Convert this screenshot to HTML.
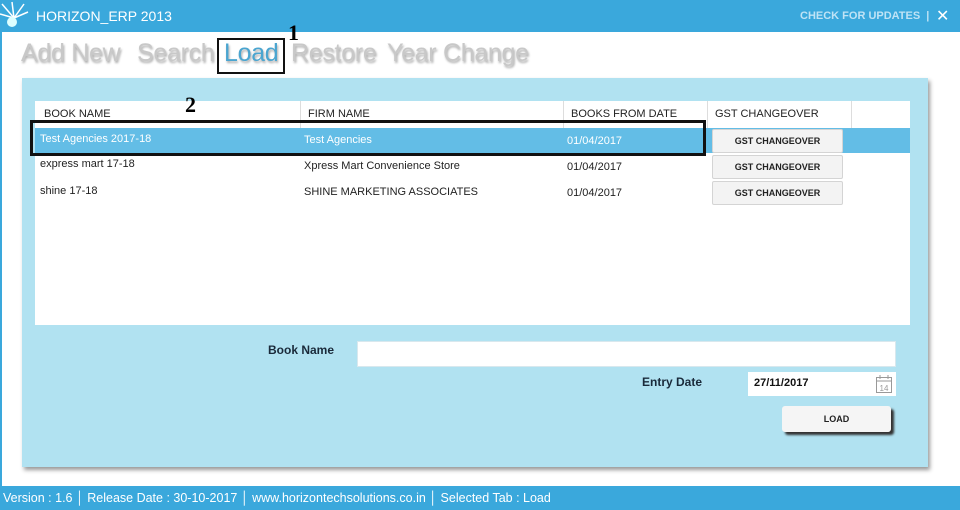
<!DOCTYPE html>
<html><head><meta charset="utf-8"><style>
*{margin:0;padding:0;box-sizing:border-box}
body{width:960px;height:510px;position:relative;overflow:hidden;background:#fff;font-family:"Liberation Sans",sans-serif}
.a{position:absolute}
#title{left:0;top:0;width:960px;height:32px;background:#3aa8dc}
#title .t{left:36px;top:8px;color:#fff;font-size:14px}
#title .u{left:800px;top:10px;color:#bfe3f5;font-size:11px;font-weight:bold}
#title .x{left:936px;top:6px;color:#fff;font-size:16px}
.nav{top:39px;font-size:25px;color:#c8c8c8;text-shadow:1px 2px 2px #aaa;letter-spacing:-0.3px}
#panel{left:22px;top:78px;width:906px;height:389px;background:#b1e2f1;box-shadow:2px 3px 4px #999}
#tbl{left:35px;top:101px;width:875px;height:224px;background:#fff}
.h{top:101px;height:27px;border-right:1px solid #ddd;font-size:11px;color:#222;padding:7px 0 0 7px}
.row{font-size:11px;color:#222}
.btn{width:131px;height:24px;background:#f3f3f3;border:1px solid #d4d4d4;border-radius:2px;font-size:9px;font-weight:bold;text-align:center;line-height:23px;color:#222}
.lbl{font-size:12px;font-weight:bold;color:#1a2a3a}
#foot{left:0;top:486px;width:960px;height:24px;background:#3aa8dc;color:#fff;font-size:12.5px;padding:5px 0 0 3px;white-space:pre}
</style></head><body>
<div class="a" style="left:0;top:32px;width:2px;height:454px;background:#3aa8dc"></div>
<div id="title" class="a">
<svg class="a" style="left:0;top:0" width="30" height="32"><g stroke="#fff" stroke-width="1.5"><line x1="14" y1="18" x2="2" y2="4"/><line x1="14" y1="18" x2="12" y2="2"/><line x1="14" y1="18" x2="24" y2="4"/><line x1="14" y1="18" x2="0" y2="14"/><line x1="14" y1="18" x2="28" y2="12"/></g><circle cx="12" cy="22" r="5" fill="#dff"/></svg>
<div class="a t">HORIZON_ERP 2013</div>
<div class="a u">CHECK FOR UPDATES &nbsp;|</div>
<div class="a x">✕</div>
</div>
<div class="a nav" style="left:21px">Add New</div>
<div class="a nav" style="left:137px">Search</div>
<div class="a nav" style="left:224px;color:#4aa5d0">Load</div>
<div class="a" style="left:217px;top:38px;width:68px;height:36px;border:2px solid #111"></div>
<div class="a" style="left:288px;top:20px;font-family:'Liberation Serif',serif;font-weight:bold;font-size:22px">1</div>
<div class="a nav" style="left:291px">Restore</div>
<div class="a nav" style="left:387px">Year Change</div>
<div id="panel" class="a"></div>
<div id="tbl" class="a"></div>
<div class="a h" style="left:37px;width:264px">BOOK NAME</div>
<div class="a h" style="left:301px;width:263px">FIRM NAME</div>
<div class="a h" style="left:564px;width:144px">BOOKS FROM DATE</div>
<div class="a h" style="left:708px;width:144px">GST CHANGEOVER</div>
<div class="a" style="left:185px;top:92px;font-family:'Liberation Serif',serif;font-weight:bold;font-size:22px">2</div>
<div class="a" style="left:35px;top:128px;width:875px;height:25px;background:#63bde6"></div>
<div class="a row" style="left:40px;top:133px;color:#fff">Test Agencies 2017-18</div>
<div class="a row" style="left:304px;top:134px;color:#fff">Test Agencies</div>
<div class="a row" style="left:567px;top:135px;color:#fff">01/04/2017</div>
<div class="a" style="left:30px;top:120px;width:676px;height:36px;border:3px solid #111"></div>
<div class="a row" style="left:40px;top:158px">express mart 17-18</div>
<div class="a row" style="left:304px;top:160px">Xpress Mart Convenience Store</div>
<div class="a row" style="left:567px;top:161px">01/04/2017</div>
<div class="a row" style="left:40px;top:185px">shine 17-18</div>
<div class="a row" style="left:304px;top:186px">SHINE MARKETING ASSOCIATES</div>
<div class="a row" style="left:567px;top:187px">01/04/2017</div>
<div class="a btn" style="left:712px;top:129px">GST CHANGEOVER</div>
<div class="a btn" style="left:712px;top:155px">GST CHANGEOVER</div>
<div class="a btn" style="left:712px;top:181px">GST CHANGEOVER</div>
<div class="a lbl" style="left:268px;top:343px">Book Name</div>
<div class="a" style="left:357px;top:341px;width:539px;height:26px;background:#fff;border:1px solid #d8e8ee"></div>
<div class="a lbl" style="left:642px;top:375px">Entry Date</div>
<div class="a" style="left:748px;top:372px;width:148px;height:24px;background:#fff"></div>
<div class="a" style="left:754px;top:377px;font-size:11px;font-weight:bold;color:#111">27/11/2017</div>
<svg class="a" style="left:875px;top:374px" width="18" height="20"><rect x="1.5" y="3.5" width="15" height="15" fill="none" stroke="#999"/><line x1="1.5" y1="7" x2="16.5" y2="7" stroke="#999"/><line x1="5" y1="1" x2="5" y2="5" stroke="#999"/><line x1="13" y1="1" x2="13" y2="5" stroke="#999"/><text x="9" y="17" font-size="8" fill="#999" text-anchor="middle" font-family="Liberation Sans">14</text></svg>
<div class="a" style="left:782px;top:406px;width:109px;height:26px;background:#f5f5f5;border-radius:3px;box-shadow:3px 3px 2px #333;font-size:9px;font-weight:bold;text-align:center;line-height:26px;color:#222">LOAD</div>
<div id="foot" class="a">Version : 1.6 │ Release Date : 30-10-2017 │ www.horizontechsolutions.co.in │ Selected Tab : Load</div>
</body></html>
